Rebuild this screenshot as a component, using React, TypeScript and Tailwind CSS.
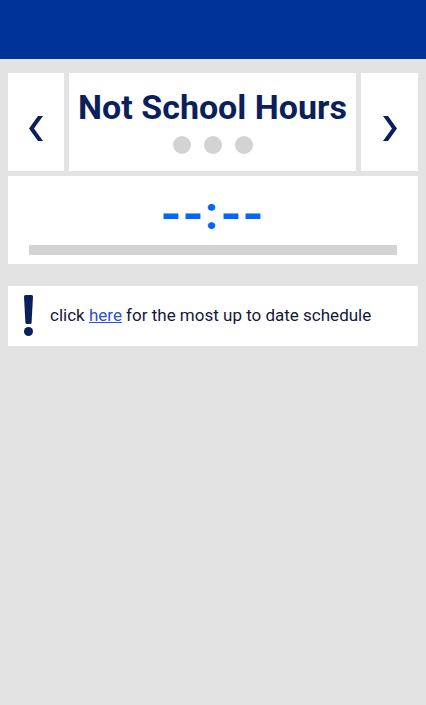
import React from "react";

function Chevron({ dir }: { dir: "left" | "right" }) {
  const pts = dir === "left" ? "9,0 14,0 5,12.5 14,25 9,25 0,12.5" : "0,0 5,0 14,12.5 5,25 0,25 9,12.5";
  return (
    <svg width="14" height="25" viewBox="0 0 14 25" className="block">
      <polygon points={pts} fill="#0a1f5c" />
    </svg>
  );
}

export default function App() {
  return (
    <div className="min-h-screen w-[426px] bg-[#e3e3e3] font-['Roboto',sans-serif]">
      <div className="h-[59px] bg-[#003399]" />
      <div className="px-[8px] pt-[14px]">
        <div className="flex h-[98px] gap-[5px]">
          <div className="flex w-[56px] items-center justify-center bg-white pt-[12px]">
            <Chevron dir="left" />
          </div>
          <div className="flex flex-1 flex-col items-center bg-white pt-[17px]">
            <div className="text-[34px] font-bold leading-[34px] text-[#0a1f5c]">Not School Hours</div>
            <div className="mt-[12px] flex gap-[13px]">
              <span className="h-[18px] w-[18px] rounded-full bg-[#d3d3d3]" />
              <span className="h-[18px] w-[18px] rounded-full bg-[#d3d3d3]" />
              <span className="h-[18px] w-[18px] rounded-full bg-[#d3d3d3]" />
            </div>
          </div>
          <div className="flex w-[57px] items-center justify-center bg-white pt-[12px]">
            <Chevron dir="right" />
          </div>
        </div>
        <div className="mt-[5px] flex h-[88px] flex-col items-center bg-white pt-[13px]">
          <div className="mr-[3px] flex text-[46px] font-bold leading-[48px] text-[#0066ff]">
            <span className="inline-block w-[22px] translate-y-[1px] scale-x-[1.17] scale-y-[1.1] text-center">-</span>
            <span className="inline-block w-[22px] translate-y-[1px] scale-x-[1.17] scale-y-[1.1] text-center">-</span>
            <span className="inline-block w-[16px] text-center">:</span>
            <span className="inline-block w-[22px] translate-y-[1px] scale-x-[1.17] scale-y-[1.1] text-center">-</span>
            <span className="inline-block w-[22px] translate-y-[1px] scale-x-[1.17] scale-y-[1.1] text-center">-</span>
          </div>
          <div className="mt-auto mb-[9px] h-[10px] w-[368px] bg-[#d3d3d3]" />
        </div>
        <div className="mt-[22px] flex h-[60px] items-center bg-white pl-[15px]">
          <svg width="11" height="41" viewBox="0 0 11 41" className="mt-[9px] block self-start">
            <path d="M1,1.5 Q1,0 2.5,0 L8.5,0 Q10,0 10,1.5 L8.6,27.5 Q8.5,29 7,29 L4,29 Q2.5,29 2.4,27.5 Z" fill="#0a1f5c" />
            <circle cx="5.5" cy="36.5" r="4.5" fill="#0a1f5c" />
          </svg>
          <div className="ml-[16px] text-[17px] text-[#15173a]">
            click <a href="#" className="text-[#2c4ee6] underline">here</a> for the most up to date schedule
          </div>
        </div>
      </div>
    </div>
  );
}
